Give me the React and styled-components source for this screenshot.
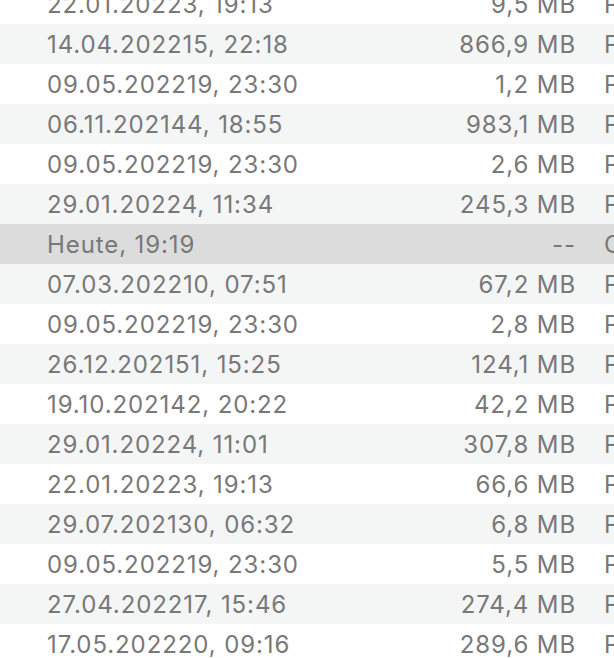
import React from "react"
import styled, { createGlobalStyle } from "styled-components"

const GlobalStyle = createGlobalStyle`
  html, body {
    margin: 0;
    padding: 0;
    background: #fff;
    overflow: hidden;
  }
`

const Viewport = styled.div`
  width: 614px;
  height: 658px;
  overflow: hidden;
  font-family: "Inter", "Liberation Sans", sans-serif;
`

const List = styled.div`
  display: flex;
  flex-direction: column;
  margin-top: -16px;
`

const Row = styled.div`
  display: grid;
  grid-template-columns: 47px 380px 149px 28px 200px;
  align-items: center;
  height: 40px;
  white-space: nowrap;
  font-size: 24px;
  letter-spacing: 0.9px;
  color: #787878;
  background: ${(p) => (p.$selected ? "#dcdcdc" : p.$striped ? "#f4f5f5" : "#fff")};
`

const DateCell = styled.div`
  grid-column: 2;
  padding-top: 1px;
`

const SizeCell = styled.div`
  grid-column: 3;
  text-align: right;
  padding-top: 1px;
`

const KindCell = styled.div`
  grid-column: 5;
  padding-top: 1px;
`

const rows = [
  ["22.01.20223, 19:13", "9,5 MB", "PDF-Dokument"],
  ["14.04.202215, 22:18", "866,9 MB", "PDF-Dokument"],
  ["09.05.202219, 23:30", "1,2 MB", "PDF-Dokument"],
  ["06.11.202144, 18:55", "983,1 MB", "PDF-Dokument"],
  ["09.05.202219, 23:30", "2,6 MB", "PDF-Dokument"],
  ["29.01.20224, 11:34", "245,3 MB", "PDF-Dokument"],
  ["Heute, 19:19", "--", "Ordner", true],
  ["07.03.202210, 07:51", "67,2 MB", "PDF-Dokument"],
  ["09.05.202219, 23:30", "2,8 MB", "PDF-Dokument"],
  ["26.12.202151, 15:25", "124,1 MB", "PDF-Dokument"],
  ["19.10.202142, 20:22", "42,2 MB", "PDF-Dokument"],
  ["29.01.20224, 11:01", "307,8 MB", "PDF-Dokument"],
  ["22.01.20223, 19:13", "66,6 MB", "PDF-Dokument"],
  ["29.07.202130, 06:32", "6,8 MB", "PDF-Dokument"],
  ["09.05.202219, 23:30", "5,5 MB", "PDF-Dokument"],
  ["27.04.202217, 15:46", "274,4 MB", "PDF-Dokument"],
  ["17.05.202220, 09:16", "289,6 MB", "PDF-Dokument"],
]

const App = () => (
  <Viewport>
    <GlobalStyle />
    <List>
      {rows.map(([date, size, kind, selected], i) => (
        <Row key={i} $striped={i % 2 === 1} $selected={selected}>
          <DateCell>{date}</DateCell>
          <SizeCell>{size}</SizeCell>
          <KindCell>{kind}</KindCell>
        </Row>
      ))}
    </List>
  </Viewport>
)

export default App
